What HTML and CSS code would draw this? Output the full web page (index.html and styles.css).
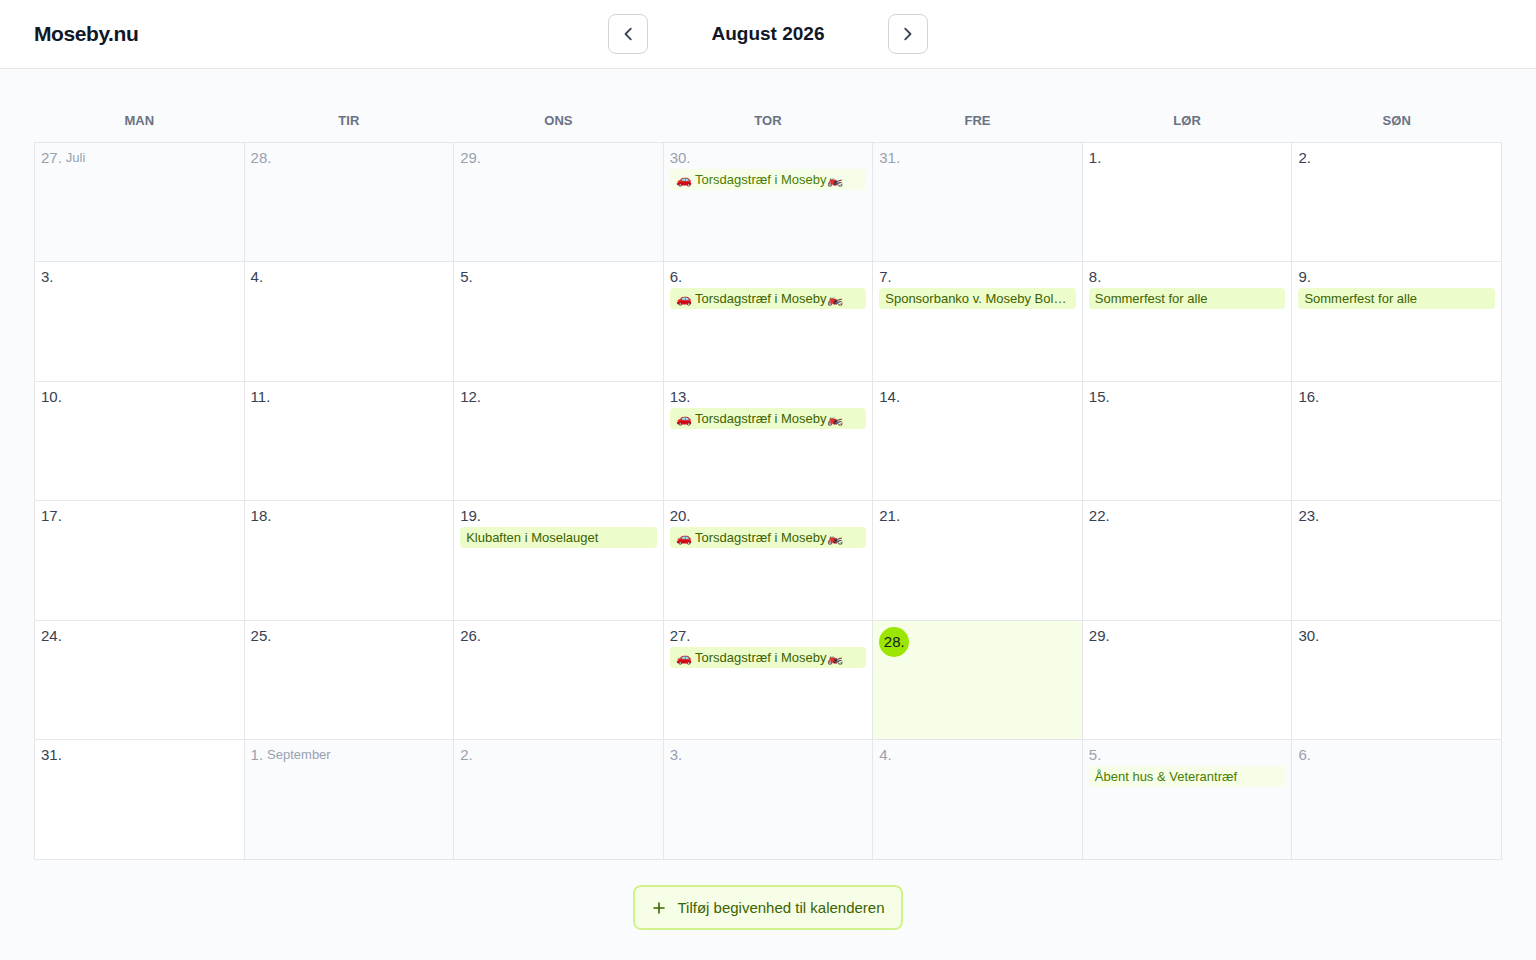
FILE: index.html
```html
<!DOCTYPE html>
<html lang="da">
<head>
  <meta charset="UTF-8" />
  <meta name="viewport" content="width=device-width, initial-scale=1" />
  <title>Moseby.nu</title>
  <link rel="stylesheet" href="styles.css">
</head>
<body>
  <header class="site-header">
    <a href="/" class="logo">Moseby.nu</a>
    <nav class="month-nav">
      <button type="button" class="nav-btn" aria-label="Forrige måned">
        <svg viewBox="0 0 20 20" class="icon"><path d="M12.800 4.700 7.500 10 12.800 15.300" /></svg>
      </button>
      <h1 class="month-title">August 2026</h1>
      <button type="button" class="nav-btn" aria-label="Næste måned">
        <svg viewBox="0 0 20 20" class="icon"><path d="M7.200 4.700 12.500 10 7.200 15.300" /></svg>
      </button>
    </nav>
  </header>

  <main>
    <table class="calendar" aria-label="Kalender">
      <thead>
        <tr>
          <th>MAN</th>
          <th>TIR</th>
          <th>ONS</th>
          <th>TOR</th>
          <th>FRE</th>
          <th>LØR</th>
          <th>SØN</th>
        </tr>
      </thead>
      <tbody>
        <tr>
          <td class="other"><div class="date">27. <span class="month">Juli</span></div></td>
          <td class="other"><div class="date">28.</div></td>
          <td class="other"><div class="date">29.</div></td>
          <td class="other"><div class="date">30.</div><a href="#" class="event">🚗 Torsdagstræf i Moseby🏍️</a></td>
          <td class="other"><div class="date">31.</div></td>
          <td><div class="date">1.</div></td>
          <td><div class="date">2.</div></td>
        </tr>
        <tr>
          <td><div class="date">3.</div></td>
          <td><div class="date">4.</div></td>
          <td><div class="date">5.</div></td>
          <td><div class="date">6.</div><a href="#" class="event">🚗 Torsdagstræf i Moseby🏍️</a></td>
          <td><div class="date">7.</div><a href="#" class="event">Sponsorbanko v. Moseby Boldklub</a></td>
          <td><div class="date">8.</div><a href="#" class="event">Sommerfest for alle</a></td>
          <td><div class="date">9.</div><a href="#" class="event">Sommerfest for alle</a></td>
        </tr>
        <tr>
          <td><div class="date">10.</div></td>
          <td><div class="date">11.</div></td>
          <td><div class="date">12.</div></td>
          <td><div class="date">13.</div><a href="#" class="event">🚗 Torsdagstræf i Moseby🏍️</a></td>
          <td><div class="date">14.</div></td>
          <td><div class="date">15.</div></td>
          <td><div class="date">16.</div></td>
        </tr>
        <tr>
          <td><div class="date">17.</div></td>
          <td><div class="date">18.</div></td>
          <td><div class="date">19.</div><a href="#" class="event">Klubaften i Moselauget</a></td>
          <td><div class="date">20.</div><a href="#" class="event">🚗 Torsdagstræf i Moseby🏍️</a></td>
          <td><div class="date">21.</div></td>
          <td><div class="date">22.</div></td>
          <td><div class="date">23.</div></td>
        </tr>
        <tr>
          <td><div class="date">24.</div></td>
          <td><div class="date">25.</div></td>
          <td><div class="date">26.</div></td>
          <td><div class="date">27.</div><a href="#" class="event">🚗 Torsdagstræf i Moseby🏍️</a></td>
          <td class="today"><div class="date">28.</div></td>
          <td><div class="date">29.</div></td>
          <td><div class="date">30.</div></td>
        </tr>
        <tr>
          <td><div class="date">31.</div></td>
          <td class="other"><div class="date">1. <span class="month">September</span></div></td>
          <td class="other"><div class="date">2.</div></td>
          <td class="other"><div class="date">3.</div></td>
          <td class="other"><div class="date">4.</div></td>
          <td class="other"><div class="date">5.</div><a href="#" class="event">Åbent hus &amp; Veterantræf</a></td>
          <td class="other"><div class="date">6.</div></td>
        </tr>
      </tbody>
    </table>

    <button type="button" class="add-btn">
      <svg viewBox="0 0 16 16" class="plus"><path d="M8 3v10M3 8h10" /></svg>
      Tilføj begivenhed til kalenderen
    </button>
  </main>
</body>
</html>
```
FILE: styles.css
```css
* {
  box-sizing: border-box;
}

body {
  margin: 0;
  font-family: "Liberation Sans", Arial, sans-serif;
  background-color: #f9fbfd;
  color: #364153;
}

.site-header {
  display: grid;
  grid-template-columns: 1fr 320px 1fr;
  align-items: center;
  padding: 14px 34px;
  background-color: white;
  border-bottom: 1px solid #e5e7eb;
}

.logo {
  font-size: 21px;
  line-height: 28px;
  font-weight: bold;
  letter-spacing: -0.02em;
  color: #101828;
  text-decoration: none;
}

.month-nav {
  display: flex;
  align-items: center;
  justify-content: space-between;
}

.month-title {
  margin: 0;
  font-size: 19px;
  line-height: 28px;
  color: #101828;
}

.nav-btn {
  display: flex;
  align-items: center;
  justify-content: center;
  width: 40px;
  height: 40px;
  padding: 0;
  background-color: white;
  border: 1px solid #d4d4d8;
  border-radius: 8px;
  color: #364153;
  cursor: pointer;
}

.icon,
.plus {
  fill: none;
  stroke: currentColor;
  stroke-linecap: round;
  stroke-linejoin: round;
}

.icon {
  width: 20px;
  height: 20px;
  stroke-width: 1.8;
}

.plus {
  width: 16px;
  height: 16px;
  stroke-width: 1.6;
}

main {
  display: flex;
  flex-direction: column;
  align-items: center;
  gap: 25px;
  padding: 30px 34px;
}

.calendar {
  width: 100%;
  height: 761px;
  table-layout: fixed;
  border-collapse: collapse;
}

.calendar th {
  height: 43px;
  padding: 2px 0 0;
  font-size: 13px;
  line-height: 20px;
  color: #6a7282;
}

.calendar td {
  padding: 6px;
  vertical-align: top;
  background-color: white;
  border: 1px solid #e5e7eb;
}

.calendar td.other {
  background-color: #f9fbfd;
}

.calendar td.today {
  background-color: #f7fee7;
}

.date {
  display: flex;
  align-items: center;
  gap: 4px;
  font-size: 15px;
  line-height: 17px;
}

.other .date {
  color: #99a1af;
}

.month {
  font-size: 13px;
}

.today .date {
  justify-content: center;
  width: 30px;
  height: 30px;
  border-radius: 50%;
  background-color: #9ae600;
  color: #101828;
}

.event {
  display: block;
  margin-top: 3px;
  padding: 0 6px;
  font-size: 13px;
  line-height: 21px;
  border-radius: 4px;
  background-color: #ecfcca;
  color: #3c6300;
  text-decoration: none;
  white-space: nowrap;
  overflow: hidden;
  text-overflow: ellipsis;
}

.other .event {
  background-color: #f7fee7;
  color: #497d00;
}

.add-btn {
  display: flex;
  align-items: center;
  gap: 10px;
  padding: 10px 16px;
  font-family: inherit;
  font-size: 15px;
  line-height: 21px;
  background-color: #f7fee7;
  border: 2px solid #d2f28a;
  border-radius: 8px;
  color: #3c6300;
  cursor: pointer;
}
```
